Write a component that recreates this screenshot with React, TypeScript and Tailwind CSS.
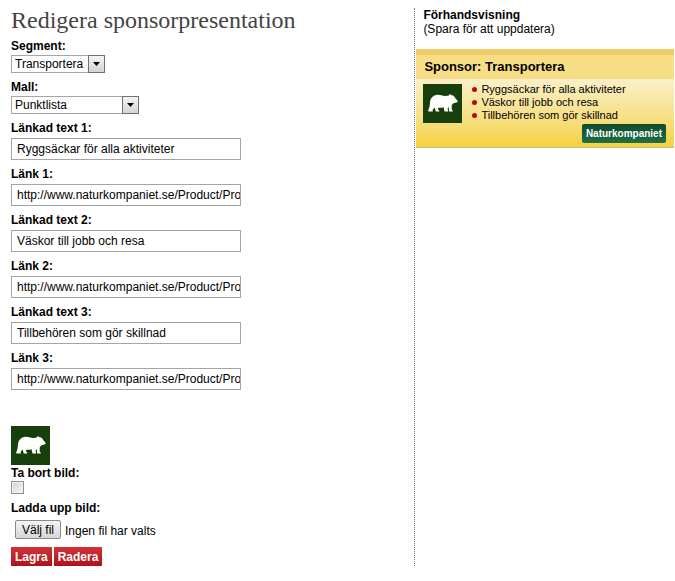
import { useRef, useState } from "react";

const segments = ["Transportera", "Bo", "Äta"];
const templates = ["Punktlista", "Löpande text"];

const productUrl = "http://www.naturkompaniet.se/Product/Product.aspx";

const initialFields = [
  { id: "text1", label: "Länkad text 1:", value: "Ryggsäckar för alla aktiviteter" },
  { id: "link1", label: "Länk 1:", value: productUrl },
  { id: "text2", label: "Länkad text 2:", value: "Väskor till jobb och resa" },
  { id: "link2", label: "Länk 2:", value: productUrl },
  { id: "text3", label: "Länkad text 3:", value: "Tillbehören som gör skillnad" },
  { id: "link3", label: "Länk 3:", value: productUrl },
];

const previewLinks = initialFields.filter((f) => f.id.startsWith("text"));

const BearLogo = () => (
  <svg
    viewBox="0 0 39 39"
    className="block size-[39px] shrink-0 bg-[#173f0c]"
    role="img"
    aria-label="Naturkompaniet"
  >
    <path
      fill="#fff"
      d="M7 18.500C7.300 14.500 10 11 14.500 10.800c3-.1 5 1.300 8 1.200 1.300 0 2.400-.4 3.400-.5.1-1.300 1.500-1.600 2.200-.5 1.900.2 3 1 3.800 2.500.6 1.200 1.500 1.900 2.400 2.900.5.6.5 1.500-.2 1.900-1 .4-2.400.5-3.600.9-.9.5-1.400 1.200-1.700 2.100-.2 1.500-.2 3 0 4.300.2.700 1 .9 1.100 1.900h-3.800l-.5-5-1 2.400c0 1 .6 1.600.6 2.600h-3.700l-.9-4.300c-1.800.7-3.700.8-5.400.5l-.3 1.300c.2.900 1.500 1.100 1.600 2.500h-3.800l-1-4-1.800 2c-.6.600-.2 1.200.1 2H5.400c-.4-1.200.2-2.200.7-3.500.7-1.900.7-3.600.9-5.500z"
    />
  </svg>
);

const SelectField = ({ id, label, options, width }) => (
  <div className="mb-1.5">
    <label htmlFor={id} className="block font-bold">
      {label}
    </label>
    <div className={`relative mt-px ${width}`}>
      <select
        id={id}
        className="block h-[18px] w-full appearance-none border border-[#a5a5a5] bg-white pl-[3px] leading-4"
      >
        {options.map((option) => (
          <option key={option}>{option}</option>
        ))}
      </select>
      <span className="pointer-events-none absolute inset-y-0 right-0 flex w-[17px] items-center justify-center border border-[#707070] bg-linear-to-b from-[#f4f4f4] to-[#d4d4d4]">
        <svg viewBox="0 0 7 4" className="h-1 w-[7px]" aria-hidden="true">
          <path d="M0 0h7L3.500 4z" />
        </svg>
      </span>
    </div>
  </div>
);

const buttonClass =
  "h-[19px] bg-linear-to-b from-[#d0333a] to-[#b10f17] px-1 font-bold text-white hover:to-[#8f0b12]";

export default function App() {
  const [fileName, setFileName] = useState("");
  const fileInput = useRef<HTMLInputElement>(null);

  return (
    <main className="grid grid-cols-[minmax(0,8fr)_minmax(0,5fr)] bg-white py-2 font-['Liberation_Sans',Arial,sans-serif] text-xs leading-4 text-black">
      <form
        className="border-r border-dotted border-[#777] pl-[11px]"
        onSubmit={(e) => e.preventDefault()}
      >
        <h1 className="mb-1.5 font-['Liberation_Serif',Georgia,serif] text-2xl leading-6 text-[#444]">
          Redigera sponsorpresentation
        </h1>

        <SelectField id="segment" label="Segment:" options={segments} width="w-[94px]" />
        <SelectField id="template" label="Mall:" options={templates} width="w-[128px]" />

        {initialFields.map((field) => (
          <div key={field.id} className="mb-1.5">
            <label htmlFor={field.id} className="block font-bold">
              {field.label}
            </label>
            <input
              id={field.id}
              type="text"
              defaultValue={field.value}
              className="mt-0.5 block h-[22px] w-[230px] border border-[#a5a5a5] bg-white pl-[5px]"
            />
          </div>
        ))}

        <div className="mt-9">
          <BearLogo />
          <label htmlFor="remove" className="block font-bold">
            Ta bort bild:
          </label>
          <input
            id="remove"
            type="checkbox"
            className="block size-[13px] appearance-none border border-[#8e8f8f] bg-linear-to-br from-[#cfd2d6] to-[#f6f6f6] shadow-[inset_0_0_0_1px_#f4f4f4] checked:from-[#444] checked:to-[#444]"
          />
        </div>

        <div className="mt-1.5">
          <label htmlFor="upload" className="block font-bold">
            Ladda upp bild:
          </label>
          <input
            id="upload"
            ref={fileInput}
            type="file"
            accept="image/*"
            className="hidden"
            onChange={(e) => setFileName(e.target.files?.[0]?.name ?? "")}
          />
          <div className="mt-1 flex items-end pl-1">
            <button
              type="button"
              onClick={() => fileInput.current?.click()}
              className="h-[19px] rounded-xs border border-[#8a8a8a] bg-linear-to-b from-[#f5f5f5] to-[#d6d6d6] px-1.5"
            >
              Välj fil
            </button>
            <span className="ml-1">{fileName || "Ingen fil har valts"}</span>
          </div>
        </div>

        <div className="mt-2 flex gap-0.5">
          <button type="submit" className={buttonClass}>
            Lagra
          </button>
          <button type="button" className={buttonClass}>
            Radera
          </button>
        </div>
      </form>

      <aside className="px-px">
        <div className="pl-[7px] leading-[14px]">
          <h2 className="font-bold">Förhandsvisning</h2>
          <p>(Spara för att uppdatera)</p>
        </div>

        <section className="mt-[13px] border-b border-[#c9b98a]">
          <h3 className="border-t-6 border-[#f0cc69] bg-[#f7de86] pl-2 text-[13px] leading-6 font-bold">
            Sponsor: Transportera
          </h3>
          <div className="bg-linear-to-b from-[#faf0c8] to-[#f5d238] pt-1 pr-2 pb-1 pl-[7px]">
            <div className="flex items-end">
              <BearLogo />
              <ul className="ml-2.5 pb-px text-[11px] leading-[13px]">
                {previewLinks.map((link) => (
                  <li key={link.id} className="flex items-center gap-1">
                    <span className="size-[5px] rounded-full bg-[#b3090f]" />
                    <a href={productUrl} className="hover:underline">
                      {link.value}
                    </a>
                  </li>
                ))}
              </ul>
            </div>
            <div className="mt-px flex justify-end">
              <a
                href="http://www.naturkompaniet.se"
                className="rounded-xs bg-linear-to-b from-[#0f4a2a] to-[#1f7048] px-1 text-[10px] leading-[19px] font-bold text-white"
              >
                Naturkompaniet
              </a>
            </div>
          </div>
        </section>
      </aside>
    </main>
  );
}
